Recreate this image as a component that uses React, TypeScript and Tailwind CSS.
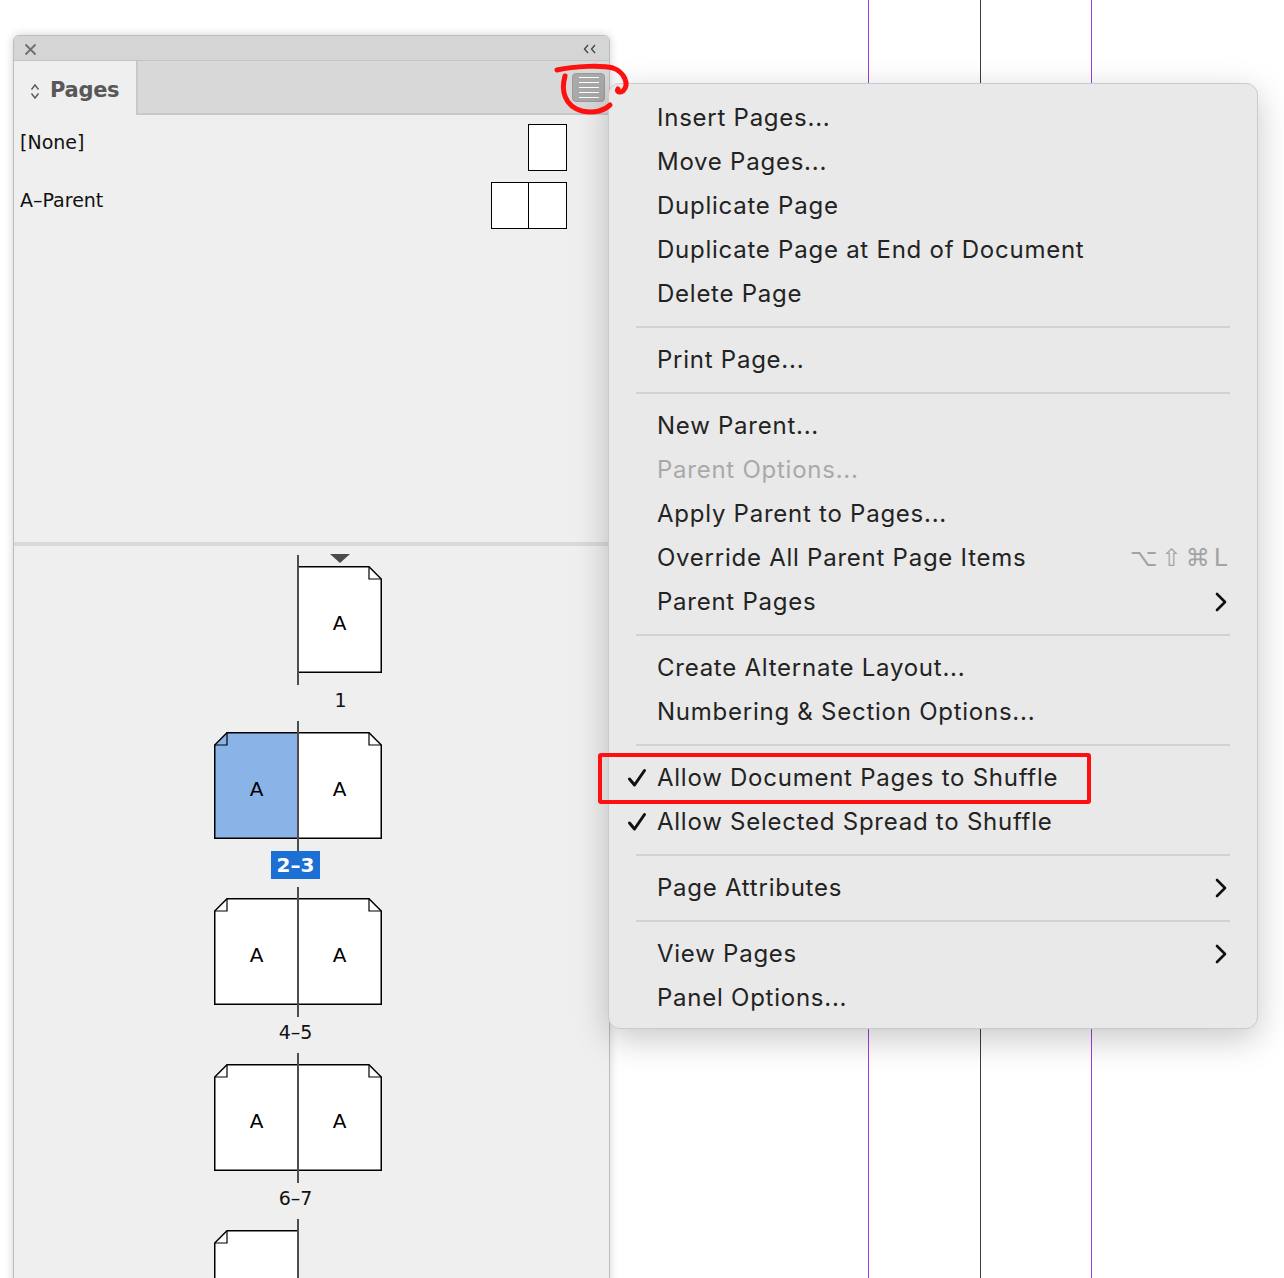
import * as React from 'react';

type Item = {
  label: string;
  disabled?: boolean;
  checked?: boolean;
  shortcut?: string;
  sub?: boolean;
};

const menu: (Item | 'sep')[] = [
  { label: 'Insert Pages...' },
  { label: 'Move Pages...' },
  { label: 'Duplicate Page' },
  { label: 'Duplicate Page at End of Document' },
  { label: 'Delete Page' },
  'sep',
  { label: 'Print Page...' },
  'sep',
  { label: 'New Parent...' },
  { label: 'Parent Options...', disabled: true },
  { label: 'Apply Parent to Pages...' },
  { label: 'Override All Parent Page Items', shortcut: '⌥⇧⌘L' },
  { label: 'Parent Pages', sub: true },
  'sep',
  { label: 'Create Alternate Layout...' },
  { label: 'Numbering & Section Options...' },
  'sep',
  { label: 'Allow Document Pages to Shuffle', checked: true },
  { label: 'Allow Selected Spread to Shuffle', checked: true },
  'sep',
  { label: 'Page Attributes', sub: true },
  'sep',
  { label: 'View Pages', sub: true },
  { label: 'Panel Options...' },
];

function PageShape({ side, selected }: { side: 'left' | 'right'; selected?: boolean }) {
  const fill = selected ? '#8ab4e8' : '#ffffff';
  return (
    <svg width="85" height="107" viewBox="0 0 85 107" className="block">
      {side === 'right' ? (
        <>
          <path d="M0.75 0.75 H72 L84.25 13 V106.25 H0.75 Z" fill={fill} stroke="#000" strokeWidth="1.5" />
          <path d="M72 0.75 V13 H84.25" fill="none" stroke="#000" strokeWidth="1.2" />
        </>
      ) : (
        <>
          <path d="M84.25 0.75 H13 L0.75 13 V106.25 H84.25 Z" fill={fill} stroke="#000" strokeWidth="1.5" />
          <path d="M13 0.75 V13 H0.75" fill="none" stroke="#000" strokeWidth="1.2" />
        </>
      )}
    </svg>
  );
}

function Page({ side, selected, letter }: { side: 'left' | 'right'; selected?: boolean; letter?: string }) {
  return (
    <div className="relative w-[85px] h-[107px]">
      <PageShape side={side} selected={selected} />
      {letter && (
        <span className="absolute inset-0 pt-[6px] flex items-center justify-center text-[20px] text-black">
          {letter}
        </span>
      )}
    </div>
  );
}

function Spread({
  left,
  right,
  label,
  selected,
  marker,
  blank,
}: {
  left?: boolean;
  right?: boolean;
  label?: string;
  selected?: boolean;
  marker?: boolean;
  blank?: boolean;
}) {
  const letter = blank ? undefined : 'A';
  return (
    <div className="relative ml-[200px] w-[170px] h-[166px]">
      {marker && (
        <svg width="20" height="10" viewBox="0 0 20 10" className="absolute left-[116px] -top-[1px]">
          <path d="M0 0 H20 L10 9 Z" fill="#4a4a4a" />
        </svg>
      )}
      <div className="flex pt-[11px]">
        <div className="w-[84px]">{left && <Page side="left" letter={letter} selected={selected} />}</div>
        <div className="-ml-px">{right && <Page side="right" letter={letter} />}</div>
      </div>
      <div className="absolute left-[83px] top-0 w-[2px] h-[130px] bg-[#4d4d4d]" />
      {label && (
        <div className={`mt-[12px] h-[28px] flex justify-center ${left ? '-ml-[3px] w-[169px]' : 'ml-[84px] w-[85px]'}`}>
          {selected ? (
            <span className="h-[28px] px-[6px] flex items-center bg-[#1c6fd3] text-white font-bold text-[20px]">
              {label}
            </span>
          ) : (
            <span className="h-[28px] pt-[2px] flex items-center text-[19px] text-[#111]">{label}</span>
          )}
        </div>
      )}
    </div>
  );
}

function Chevron() {
  return (
    <svg width="12" height="20" viewBox="0 0 12 20">
      <path d="M2 2 L10 10 L2 18" fill="none" stroke="#111" strokeWidth="2.6" strokeLinecap="round" strokeLinejoin="round" />
    </svg>
  );
}

function Check() {
  return (
    <svg width="20" height="20" viewBox="0 0 20 20">
      <path d="M2.5 11 L7.5 17 L17.5 2.5" fill="none" stroke="#111" strokeWidth="3" strokeLinecap="round" strokeLinejoin="round" />
    </svg>
  );
}

function PagesPanel() {
  return (
    <div className="absolute left-[13px] top-[35px] w-[597px] h-[1260px] flex flex-col rounded-t-[6px] border border-[#bdbdbd] bg-[#efefef] shadow-[0_0_10px_rgba(0,0,0,0.18)] font-['DejaVu_Sans',sans-serif] overflow-hidden">
      {/* title bar */}
      <div className="h-[25px] shrink-0 flex items-center justify-between pl-[10px] pr-[12px] pt-[2px] bg-[#d5d5d5] border-b border-[#c4c4c4]">
        <svg width="13" height="13" viewBox="0 0 13 13">
          <path d="M1.5 1.5 L11.5 11.5 M11.5 1.5 L1.5 11.5" stroke="#6f6f6f" strokeWidth="1.8" />
        </svg>
        <svg width="14" height="10" viewBox="0 0 14 10">
          <path d="M5 1 L1.5 5 L5 9 M12 1 L8.5 5 L12 9" fill="none" stroke="#444" strokeWidth="1.3" />
        </svg>
      </div>

      {/* tabs */}
      <div className="h-[54px] shrink-0 flex bg-[#d8d8d8] border-b-2 border-[#c8c8c8]">
        <div className="w-[124px] -mb-[2px] flex items-center gap-[10px] pl-[16px] pt-[6px] bg-[#efefef] border-r-2 border-[#c8c8c8]">
          <svg width="10" height="17" viewBox="0 0 10 17">
            <path d="M1.5 6.5 L5 2 L8.5 6.5 M1.5 10.5 L5 15 L8.5 10.5" fill="none" stroke="#5a5a5a" strokeWidth="1.4" />
          </svg>
          <span className="text-[21px] font-bold text-[#585858] tracking-[-0.3px]">Pages</span>
        </div>
        <div className="flex-1 flex items-center justify-end pr-[4px] pt-[1px]">
          <div className="w-[33px] h-[29px] rounded-[4px] bg-[#a9a9a9] border border-[#9a9a9a] flex flex-col items-center justify-center gap-[3.5px]">
            {[0, 1, 2, 3, 4].map((i) => (
              <div key={i} className="w-[20px] h-[1.5px] bg-white" />
            ))}
          </div>
        </div>
      </div>

      {/* parents */}
      <div className="h-[427px] shrink-0 pt-[9px] pl-[6px] pr-[42px] flex flex-col gap-[11px]">
        <div className="h-[47px] flex justify-between items-start">
          <span className="pt-[6px] leading-[24px] text-[19px] text-[#111]">[None]</span>
          <div className="w-[39px] h-[47px] border-[1.5px] border-black bg-white" />
        </div>
        <div className="h-[47px] flex justify-between items-start">
          <span className="pt-[6px] leading-[24px] text-[19px] text-[#111]">A–Parent</span>
          <div className="flex">
            <div className="w-[39px] h-[47px] border-[1.5px] border-black bg-white" />
            <div className="w-[39px] h-[47px] -ml-[1.5px] border-[1.5px] border-black bg-white" />
          </div>
        </div>
      </div>

      <div className="h-[4px] shrink-0 bg-[#dadada]" />

      {/* pages */}
      <div className="flex-1 pt-[9px]">
        <Spread right label="1" marker />
        <Spread left right label="2–3" selected />
        <Spread left right label="4–5" />
        <Spread left right label="6–7" />
        <Spread left blank />
      </div>
    </div>
  );
}

function FlyoutMenu() {
  return (
    <div className="absolute left-[608px] top-[83px] w-[650px] pt-[12px] pb-[8px] rounded-[12px] bg-[#e9e9e9] border border-[#cacaca] shadow-[0_10px_34px_rgba(0,0,0,0.22)] font-['Inter',sans-serif]">
      {menu.map((item, i) =>
        item === 'sep' ? (
          <div key={i} className="h-[22px] flex items-center px-[27px]">
            <div className="h-[2px] w-full bg-[#d2d2d2]" />
          </div>
        ) : (
          <div key={i} className="relative h-[44px] flex items-center justify-between pl-[48px] pr-[30px]">
            {item.checked && (
              <div className="absolute left-[18px] top-[12px]">
                <Check />
              </div>
            )}
            <span className={`text-[24px] tracking-[0.75px] ${item.disabled ? 'text-[#a9a9a9]' : 'text-[#232323]'}`}>
              {item.label}
            </span>
            {item.shortcut && (
              <span className="text-[24px] tracking-[4px] -mr-[4px] text-[#a3a3a3] font-['DejaVu_Sans',sans-serif]">
                {item.shortcut}
              </span>
            )}
            {item.sub && <Chevron />}
          </div>
        )
      )}
    </div>
  );
}

export default function App() {
  return (
    <div className="relative w-[1284px] h-[1278px] overflow-hidden bg-white">
      {/* layout guides on the page behind */}
      <div className="absolute left-[868px] top-0 w-px h-full bg-[#9b3fe0]" />
      <div className="absolute left-[980px] top-0 w-px h-full bg-[#3d3d3d]" />
      <div className="absolute left-[1091px] top-0 w-px h-full bg-[#9b3fe0]" />

      <PagesPanel />
      <FlyoutMenu />

      {/* red annotations */}
      <div className="absolute left-[598px] top-[753px] w-[493px] h-[51px] border-[4px] border-[#ff1010] rounded-[3px]" />
      <svg width="90" height="60" viewBox="0 0 90 60" className="absolute left-[550px] top-[60px]">
        <path d="M7 10 C25 6, 52 5, 63 8 C74 12, 80 24, 73 31 C70 33, 66 32, 68 29" fill="none" stroke="#ff1010" strokeWidth="5" strokeLinecap="round" />
        <path d="M15 16 C11 30, 14 46, 32 51 C45 54, 55 50, 60 45" fill="none" stroke="#ff1010" strokeWidth="5" strokeLinecap="round" />
      </svg>
    </div>
  );
}
